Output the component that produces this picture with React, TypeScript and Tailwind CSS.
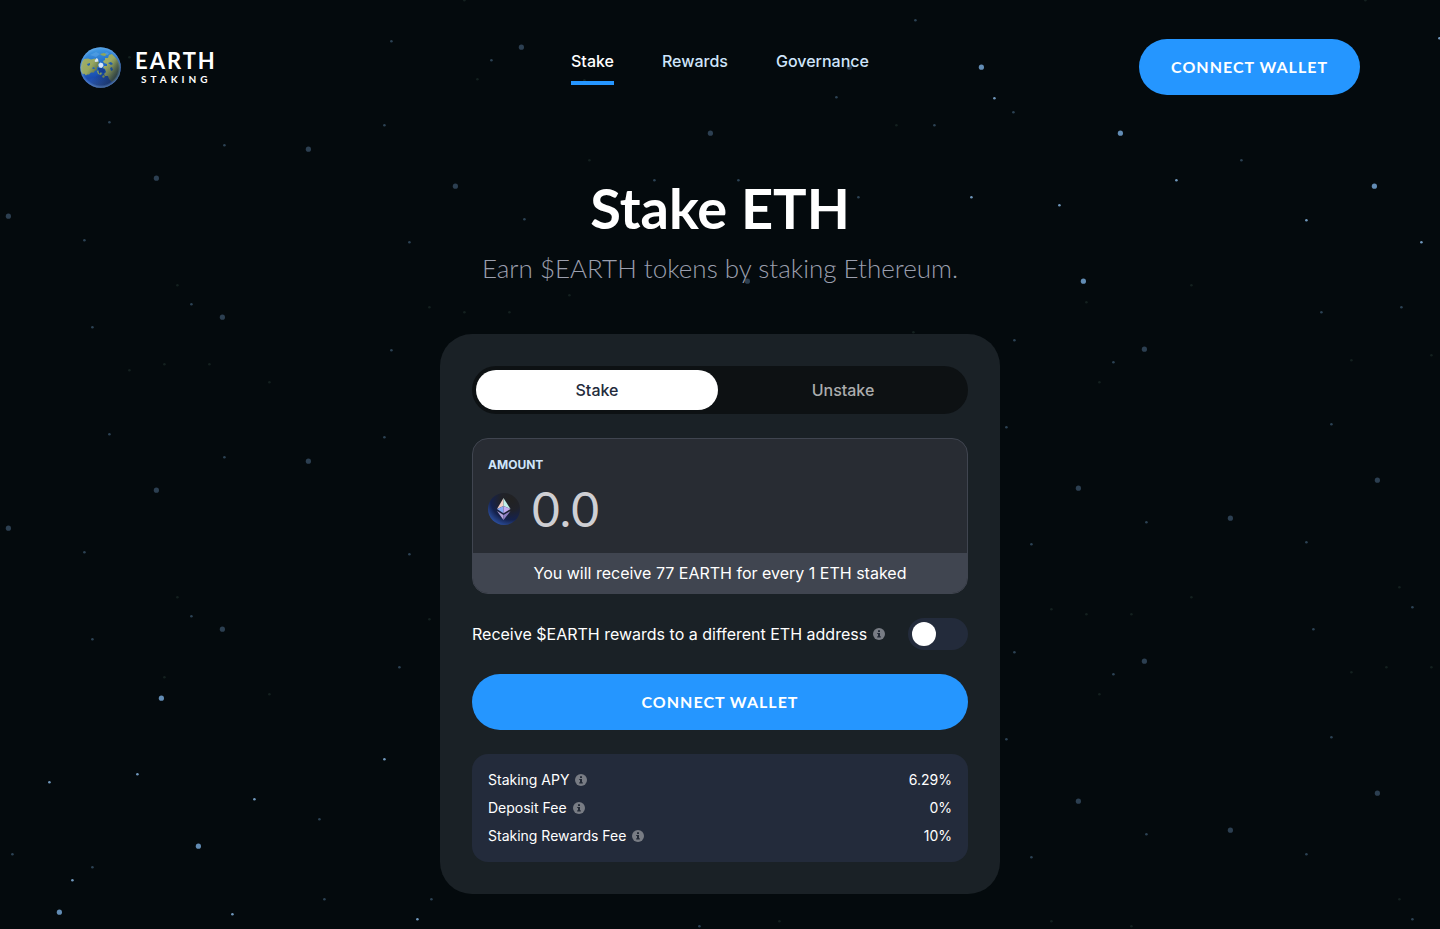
import { useState } from "react";

type Point = [number, number];

const brightLarge: Point[] = [
  [981, 67], [1120, 133], [1374, 186], [1083, 281], [161, 698], [198, 846], [59, 912],
];

const brightSmall: Point[] = [
  [994, 98], [971, 197], [1176, 180], [1059, 205], [1306, 220], [1421, 242], [384, 759], [137, 774],
  [49, 782], [254, 799], [72, 880], [232, 914], [417, 919], [1439, 38],
];

const dimLarge: Point[] = [
  [521, 47], [849, 67], [710, 133], [455, 186], [747, 281], [308, 149], [156, 178], [8, 216], [222, 317],
  [308, 461], [156, 490], [1144, 349], [1078, 488], [1377, 480], [8, 528], [222, 629], [1230, 518],
  [1144, 661], [1078, 801], [1230, 830], [1377, 793],
];

const dimSmall: Point[] = [
  [391, 41], [491, 60], [915, 20], [934, 125], [836, 97], [654, 180], [524, 219], [858, 197], [109, 122], [384, 125],
  [224, 145], [84, 240], [409, 242], [191, 304], [92, 327], [391, 350], [109, 434], [384, 437],
  [224, 457], [1013, 112], [1241, 160], [1401, 307], [1321, 312], [1014, 340], [1113, 362], [1006, 427],
  [1331, 424], [84, 552], [409, 554], [191, 616], [92, 639], [399, 667], [319, 819], [12, 854],
  [92, 867], [324, 899], [431, 899], [1146, 522], [1031, 544], [1306, 542], [1412, 607], [1313, 629],
  [1014, 652], [1113, 674], [1006, 739], [1331, 737], [1146, 834], [1031, 857], [1306, 854], [1412, 919],
  [738, 180], [699, 926],
];

const faint: Point[] = [
  [177, 285], [129, 370], [164, 364], [209, 364], [269, 382], [429, 307], [1191, 285], [1086, 302],
  [1351, 360], [1431, 355], [1099, 382], [177, 597], [429, 619], [164, 677], [269, 694], [1399, 587],
  [1051, 609], [1086, 614], [1131, 614], [1191, 597], [1351, 672], [1386, 667], [1431, 667], [1099, 694],
  [1399, 899], [1051, 921], [1131, 926], [569, 295], [464, 312], [509, 312], [589, 160], [896, 125],
  [584, 80], [129, 57], [913, 332], [477, 79], [1365, 0], [464, 0], [779, 921],
];

const starGroups = [
  { points: brightLarge, r: 2.6, fill: "#628cb4" },
  { points: brightSmall, r: 1.3, fill: "#7097bb" },
  { points: dimLarge, r: 2.6, fill: "#2c3f51" },
  { points: dimSmall, r: 1.3, fill: "#2c4254" },
  { points: faint, r: 1.3, fill: "#14201f" },
];

function Stars() {
  return (
    <svg
      aria-hidden="true"
      viewBox="0 0 1440 929"
      preserveAspectRatio="xMidYMin slice"
      className="pointer-events-none absolute inset-0 h-full w-full"
    >
      {starGroups.map((group) =>
        group.points.map(([x, y]) => (
          <circle key={`${x}-${y}`} cx={x + 0.4} cy={y + 0.2} r={group.r} fill={group.fill} />
        )),
      )}
    </svg>
  );
}

function Globe() {
  return (
    <svg aria-hidden="true" viewBox="0 0 41 41" className="size-[41px]">
      <defs>
        <linearGradient id="ocean" x1="0.4" y1="0" x2="0.6" y2="1">
          <stop offset="0" stopColor="#46a0e6" />
          <stop offset="0.35" stopColor="#2473cc" />
          <stop offset="0.7" stopColor="#1a4cae" />
          <stop offset="1" stopColor="#3f68b8" />
        </linearGradient>
        <linearGradient id="land" x1="0" y1="0" x2="1" y2="0.6">
          <stop offset="0" stopColor="#a3b065" />
          <stop offset="0.6" stopColor="#98a860" />
          <stop offset="1" stopColor="#596f4c" />
        </linearGradient>
        <linearGradient id="shade" x1="0.35" y1="0.3" x2="0.95" y2="0.9">
          <stop offset="0.35" stopColor="#08152f" stopOpacity="0" />
          <stop offset="0.8" stopColor="#0a1a3c" stopOpacity="0.6" />
          <stop offset="1" stopColor="#34558c" stopOpacity="0.5" />
        </linearGradient>
        <radialGradient id="rim" cx="0.5" cy="0.5" r="0.5">
          <stop offset="0.86" stopColor="#7fb2ec" stopOpacity="0" />
          <stop offset="1" stopColor="#7fb2ec" stopOpacity="0.5" />
        </radialGradient>
        <clipPath id="disc">
          <circle cx="20.5" cy="20.5" r="20.3" />
        </clipPath>
      </defs>
      <g clipPath="url(#disc)">
        <rect width="41" height="41" fill="url(#ocean)" />
        <path
          fill="url(#land)"
          d="M2 15l2-3 4-.5 3 1 4-1 3 2 1 2-1 2 1 2-2 1 0 3-2 0-1 2-3 0-2 2-2 0-1 1-2-2-1 1-2-3-.5-4z"
        />
        <path
          fill="url(#land)"
          d="M23 14l2-1 0-2 3 0 1-3 3-1 5 5 3 6 0 9-4 6-4 2-3-3-1-3-3 0-1-2 2-2-1-3-2-1 1-2 3 0 0-2-3-1z"
        />
        <path fill="#8ea65c" d="M20 7l4-1 3 1-2 2-3-.5zM17 24l2-1 1 2 2 1-1 2-3-1zM22 29l2-1 1 2-2 1z" />
        <path fill="#2262b8" d="M28 16l3-1 2 2-2 1zM30 21l2-1 1 3-2 1zM7 17l3-1 0 2-2 1zM12 21l2-1 1 2-2 0z" />
        <path fill="#16409a" d="M18 21l4 0 3 2-1 3-3-1-2 2z" />
        <path fill="#d5e5f5" d="M14.500 14l2-3 1.500 1 .5 2.500-3 .5z" />
        <path fill="#d5e6f9" d="M18.500 17l2-1.500 2.500 1 .5 2.500-2 2-2-.5-1-1.500z" />
        <path fill="#5aa4e4" fillOpacity="0.6" d="M10 8l6-3 4 2-4 3zM26 5l3 1-1 2-3-1z" />
      </g>
      <circle cx="20.5" cy="20.5" r="20.3" fill="url(#shade)" />
      <circle cx="20.5" cy="20.5" r="20.3" fill="url(#rim)" />
    </svg>
  );
}

function Logo() {
  return (
    <a href="#" className="flex items-center gap-3.5 justify-self-start font-['Lato',sans-serif] font-bold">
      <Globe />
      <span className="flex flex-col">
        <span className="text-[22px] leading-6 tracking-[2px]">EARTH</span>
        <span className="pl-1.5 text-[10px] leading-3 tracking-[4px]">STAKING</span>
      </span>
    </a>
  );
}

function EthIcon() {
  return (
    <svg aria-hidden="true" viewBox="0 0 32 32" className="size-8 shrink-0">
      <defs>
        <radialGradient id="coin" cx="0.72" cy="0.2" r="0.85">
          <stop offset="0" stopColor="#222222" />
          <stop offset="0.4" stopColor="#20222a" />
          <stop offset="0.75" stopColor="#15224d" />
          <stop offset="1" stopColor="#294a96" />
        </radialGradient>
      </defs>
      <circle cx="16" cy="16" r="16" fill="url(#coin)" />
      <path fill="#f3cfc6" d="M15.500 5v8L9 16z" />
      <path fill="#bff0ea" d="M15.500 5v8l7 3z" />
      <path fill="#86a9f3" d="M15.500 13v7.200L9 16z" />
      <path fill="#c3abf0" d="M15.500 13v7.200l7-4.200z" />
      <path fill="#b6a6dc" d="M9 18l6.500 4v5z" />
      <path fill="#8f7fc4" d="M22.500 18l-7 4v5z" />
    </svg>
  );
}

function InfoIcon() {
  return (
    <svg viewBox="0 0 12 12" role="img" aria-label="More information" className="size-3 shrink-0">
      <circle cx="6" cy="6" r="6" fill="#787c84" />
      <path fill="#232a36" d="M5 2.200h2v1.800H5zM4.200 4.900H7v3.300h.8v1.300H4.200V8.200H5V6.100h-.8z" />
    </svg>
  );
}

const navItems = ["Stake", "Rewards", "Governance"];

const stats = [
  { label: "Staking APY", value: "6.29%" },
  { label: "Deposit Fee", value: "0%" },
  { label: "Staking Rewards Fee", value: "10%" },
];

const connectStyle =
  "h-14 rounded-full bg-[#2596ff] px-8 font-['Lato',sans-serif] text-base font-bold tracking-[1px] text-white";

export default function App() {
  const [tab, setTab] = useState("Stake");
  const [amount, setAmount] = useState("");

  return (
    <div className="relative min-h-screen overflow-hidden bg-[#040a0d] font-['Inter',sans-serif] text-white">
      <Stars />

      <div className="relative">
        <header className="grid grid-cols-[1fr_auto_1fr] items-center px-20 pt-[39px]">
          <Logo />
          <nav className="flex gap-12 text-base font-medium">
            {navItems.map((item) => (
              <a
                key={item}
                href="#"
                className={
                  item === "Stake"
                    ? "border-b-4 border-[#2596ff] pb-2 text-white"
                    : "border-b-4 border-transparent pb-2 text-[#cfe5fb]"
                }
              >
                {item}
              </a>
            ))}
          </nav>
          <button type="button" className={`${connectStyle} justify-self-end`}>
            CONNECT WALLET
          </button>
        </header>

        <main className="flex flex-col items-center px-4 pt-[77px] pb-8">
          <h1 className="font-['Lato',sans-serif] text-[56px] leading-[72px] font-bold">Stake ETH</h1>
          <p className="mt-1.5 text-center font-['Lato',sans-serif] text-[26px] leading-9 font-light text-[#9b9fae]">
            Earn $EARTH tokens by staking Ethereum.
          </p>

          <section className="mt-12 flex w-full max-w-[560px] flex-col gap-6 rounded-[32px] bg-[#1a2126] p-8">
            <div role="tablist" className="grid h-12 grid-cols-2 gap-1 rounded-full bg-[#0d1113] p-1">
              {["Stake", "Unstake"].map((name) => (
                <button
                  key={name}
                  type="button"
                  role="tab"
                  aria-selected={tab === name}
                  onClick={() => setTab(name)}
                  className={
                    tab === name
                      ? "rounded-full bg-white text-base font-medium text-[#232b3b]"
                      : "rounded-full text-base font-medium text-[#abacad]"
                  }
                >
                  {name}
                </button>
              ))}
            </div>

            <div className="overflow-hidden rounded-2xl border border-[#404550] bg-[#282c33]">
              <div className="px-[15px] pt-4 pb-4">
                <label htmlFor="amount" className="block text-xs leading-5 font-bold text-[#cfe5fb]">
                  AMOUNT
                </label>
                <div className="mt-1.5 flex items-center gap-3">
                  <EthIcon />
                  <input
                    id="amount"
                    type="text"
                    inputMode="decimal"
                    placeholder="0.0"
                    value={amount}
                    onChange={(e) => setAmount(e.target.value)}
                    className="h-14 w-full min-w-0 bg-transparent font-['Lato',sans-serif] text-5xl leading-[56px] text-white outline-none placeholder:text-[#cfcfd3]"
                  />
                </div>
              </div>
              <p className="bg-[#404550] py-2 text-center text-base">
                You will receive 77 EARTH for every 1 ETH staked
              </p>
            </div>

            <div className="flex items-center justify-between">
              <label htmlFor="other-address" className="flex items-center gap-1.5 text-base">
                Receive $EARTH rewards to a different ETH address
                <InfoIcon />
              </label>
              <input
                id="other-address"
                type="checkbox"
                role="switch"
                className="h-8 w-[60px] shrink-0 appearance-none rounded-full bg-[#232b3b] p-1 before:block before:size-6 before:rounded-full before:bg-white checked:bg-[#2596ff] checked:before:ml-7"
              />
            </div>

            <button type="button" className={connectStyle}>
              CONNECT WALLET
            </button>

            <dl className="rounded-2xl bg-[#232b3b] px-4 py-3 text-sm leading-7">
              {stats.map((stat) => (
                <div key={stat.label} className="flex items-center justify-between">
                  <dt className="flex items-center gap-1.5">
                    {stat.label}
                    <InfoIcon />
                  </dt>
                  <dd>{stat.value}</dd>
                </div>
              ))}
            </dl>
          </section>
        </main>
      </div>
    </div>
  );
}
